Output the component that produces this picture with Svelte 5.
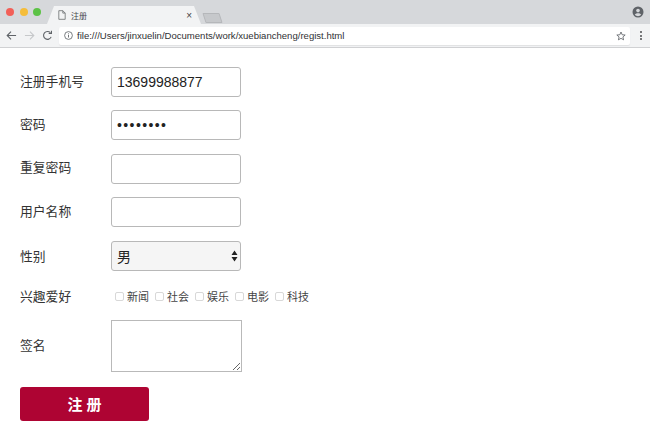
<script lang="ts">
  const hobbies = ['新闻', '社会', '娱乐', '电影', '科技'];
</script>

<div class="window">
  <div class="tabstrip">
    <div class="lights">
      <span class="light red"></span>
      <span class="light yellow"></span>
      <span class="light green"></span>
    </div>
    <div class="tab">
      <svg class="doc" viewBox="0 0 10 12" width="8" height="10" aria-hidden="true">
        <path d="M1 .6h5l3 3v7.800H1zM6 .6v3h3" fill="none" stroke="#6b6d70" stroke-width="1" />
      </svg>
      <span class="tab-title">注册</span>
      <span class="tab-close">×</span>
    </div>
    <div class="new-tab"></div>
    <svg class="profile" viewBox="0 0 12 12" width="12" height="12" aria-hidden="true">
      <circle cx="6" cy="6" r="5.500" fill="#5f6368" />
      <circle cx="6" cy="4.600" r="1.800" fill="#d6d8db" />
      <path d="M2.800 8.800c.8-1.200 2-1.600 3.200-1.600s2.400.4 3.200 1.600c-.8.9-2 1.400-3.200 1.400s-2.400-.5-3.200-1.400z" fill="#d6d8db" />
    </svg>
  </div>

  <div class="toolbar">
    <svg class="nav" viewBox="0 0 12 12" width="11" height="11" aria-hidden="true">
      <path d="M11 6H1.500M5.500 1.800 1.300 6l4.200 4.200" fill="none" stroke="#5f6368" stroke-width="1.200" />
    </svg>
    <svg class="nav" viewBox="0 0 12 12" width="11" height="11" aria-hidden="true">
      <path d="M1 6h9.500M6.500 1.800 10.700 6l-4.200 4.200" fill="none" stroke="#c6c8ca" stroke-width="1.200" />
    </svg>
    <svg class="nav" viewBox="0 0 12 12" width="11" height="11" aria-hidden="true">
      <path d="M10 7.500A4.300 4.300 0 1 1 9.200 3M10.300 .8v3h-3" fill="none" stroke="#5f6368" stroke-width="1.200" />
    </svg>
    <div class="omnibox">
      <svg viewBox="0 0 12 12" width="9" height="9" aria-hidden="true">
        <circle cx="6" cy="6" r="5.200" fill="none" stroke="#5f6368" stroke-width="1.100" />
        <path d="M6 5.300v3.400M6 3.200v1.200" stroke="#5f6368" stroke-width="1.200" />
      </svg>
      <span class="url">file:///Users/jinxuelin/Documents/work/xuebiancheng/regist.html</span>
      <svg class="star" viewBox="0 0 12 12" width="10" height="10" aria-hidden="true">
        <path d="M6 1.200 7.400 4.500l3.600.3-2.700 2.300.8 3.500L6 8.800l-3.100 1.800.8-3.500L1 4.800l3.600-.3z" fill="none" stroke="#5f6368" stroke-width="1" />
      </svg>
    </div>
    <div class="menu"><i></i><i></i><i></i></div>
  </div>

  <form class="form">
    <div class="row">
      <label for="phone">注册手机号</label>
      <input id="phone" type="text" value="13699988877" />
    </div>
    <div class="row">
      <label for="pwd">密码</label>
      <input id="pwd" class="secret" type="password" value="12345678" />
    </div>
    <div class="row">
      <label for="pwd2">重复密码</label>
      <input id="pwd2" type="password" />
    </div>
    <div class="row">
      <label for="uname">用户名称</label>
      <input id="uname" type="text" />
    </div>
    <div class="row">
      <label for="sex" class="sex-label">性别</label>
      <div class="select" id="sex">
        <span>男</span>
        <svg viewBox="0 0 7 12" width="7" height="12" aria-hidden="true">
          <path d="M3.500 .5 6.500 5H.5zM3.500 11.500 .5 7h6z" fill="#222" />
        </svg>
      </div>
    </div>
    <div class="row hobby-row">
      <span class="label">兴趣爱好</span>
      <div class="hobbies">
        {#each hobbies as h}
          <span class="hobby"><i class="check"></i>{h}</span>
        {/each}
      </div>
    </div>
    <div class="row sign-row">
      <label for="sign">签名</label>
      <textarea id="sign"></textarea>
    </div>
    <button type="button" class="submit">注 册</button>
  </form>
</div>

<style>
  :global(body) {
    margin: 0;
    background: #fff;
    font-family: "Liberation Sans", "Noto Sans CJK SC", sans-serif;
  }
  .window {
    width: 650px;
    height: 444px;
    overflow: hidden;
    display: flex;
    flex-direction: column;
  }

  .tabstrip {
    height: 24px;
    flex-shrink: 0;
    background: #d6d8db;
    display: flex;
    align-items: flex-end;
    padding: 0 6px 0 6px;
    box-sizing: border-box;
  }
  .lights {
    display: flex;
    gap: 5.500px;
    align-self: flex-start;
    margin-top: 8px;
    width: 40px;
  }
  .light {
    width: 8px;
    height: 8px;
    border-radius: 50%;
  }
  .red { background: #f25f58; }
  .yellow { background: #f5bd3a; }
  .green { background: #5cc246; }
  .tab {
    width: 154px;
    height: 18px;
    margin-left: 1px;
    background: #f2f3f4;
    clip-path: polygon(0 100%, 7px 0, calc(100% - 7px) 0, 100% 100%);
    display: flex;
    align-items: center;
    padding: 0 9px 0 11px;
    box-sizing: border-box;
    font-size: 8px;
    color: #45474a;
  }
  .tab-title { margin-left: 5px; }
  .tab-close {
    margin-left: auto;
    font-size: 10px;
    color: #444;
  }
  .new-tab {
    width: 17px;
    height: 10px;
    margin: 0 0 1px 3px;
    background: #c6c8cb;
    border: 1px solid #b5b7ba;
    box-sizing: border-box;
    transform: skewX(18deg);
    border-radius: 1px;
  }
  .profile { margin: 0 0 6px auto; }

  .toolbar {
    height: 24px;
    flex-shrink: 0;
    background: #f2f3f4;
    border-bottom: 1px solid #d0d1d3;
    box-sizing: border-box;
    display: flex;
    align-items: center;
    padding: 0 8px 0 6px;
  }
  .nav { margin-right: 7px; flex-shrink: 0; }
  .omnibox {
    flex: 1;
    height: 18px;
    margin-left: -1px;
    background: #fff;
    border-radius: 2px;
    display: flex;
    align-items: center;
    padding: 0 4px 0 5px;
    box-sizing: border-box;
    box-shadow: 0 1px 1px #e0e1e3;
  }
  .url {
    margin-left: 4px;
    font-family: "Liberation Sans", sans-serif;
    font-size: 9.550px;
    color: #303134;
  }
  .star { margin-left: auto; }
  .menu {
    display: flex;
    flex-direction: column;
    gap: 1.500px;
    margin-left: 10px;
  }
  .menu i {
    width: 2px;
    height: 2px;
    border-radius: 50%;
    background: #4c4e51;
  }

  .form {
    padding: 19px 20px 0;
    color: #333;
    font-size: 12.800px;
  }
  .row {
    display: flex;
    align-items: center;
    height: 30px;
    margin-bottom: 13.400px;
  }
  label, .label {
    width: 91px;
    flex-shrink: 0;
    padding-bottom: 4px;
    box-sizing: content-box;
  }
  .sex-label { padding-bottom: 1px; }
  input, .select {
    width: 130px;
    height: 30px;
    box-sizing: border-box;
    border: 1px solid #b8b8b8;
    border-radius: 3px;
    padding: 0 5px;
    font-size: 14px;
    font-family: inherit;
    color: #222;
    outline: none;
    background: #fff;
  }
  .secret { letter-spacing: 1.400px; }
  .select {
    display: flex;
    align-items: center;
    justify-content: space-between;
    background: #f5f5f5;
    padding-right: 2px;
  }
  .hobby-row {
    height: 24px;
    margin-bottom: 0;
  }
  .hobby-row .label { padding-bottom: 0; }
  .hobbies {
    display: flex;
    font-size: 11px;
    color: #444;
    margin: 1px 0 0 4px;
  }
  .hobby {
    display: flex;
    align-items: center;
    width: 40px;
  }
  .check {
    width: 9px;
    height: 9px;
    margin-right: 3px;
    border: 1px solid #d8d8d8;
    border-radius: 2px;
    box-sizing: border-box;
  }
  .sign-row {
    height: 52px;
    margin-top: 11.600px;
    margin-bottom: 15px;
  }
  .sign-row label { padding-bottom: 2px; }
  textarea {
    width: 131px;
    height: 52px;
    box-sizing: border-box;
    border: 1px solid #b9b9b9;
    margin: 0;
    padding: 2px;
    outline: none;
  }
  .submit {
    display: block;
    width: 129px;
    height: 34px;
    border: none;
    border-radius: 3px;
    background: #ae0433;
    color: #fff;
    font-family: inherit;
    font-size: 15px;
    font-weight: 700;
  }
</style>
